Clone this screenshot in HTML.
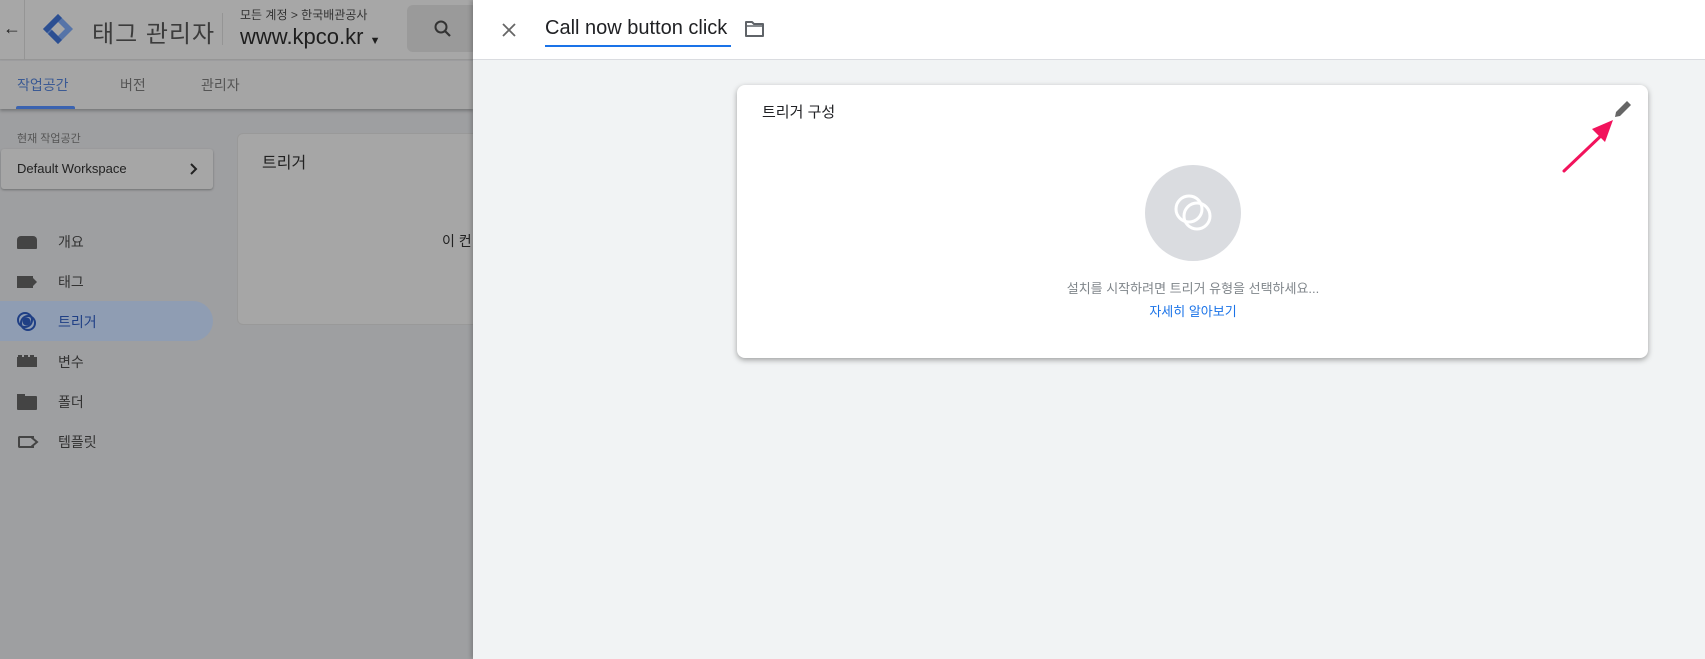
<!DOCTYPE html>
<html><head><meta charset="utf-8"><style>
*{margin:0;padding:0;box-sizing:border-box}
body{width:1705px;height:659px;overflow:hidden;position:relative;font-family:"Liberation Sans","Noto Sans CJK KR",sans-serif;background:#9e9fa1}
.a{position:absolute}
</style></head><body>
<div class="a" style="left:0;top:0;width:473px;height:60px;background:#a7a7a7;border-bottom:1px solid #979797"></div>
<div class="a" style="left:24px;top:0;width:1px;height:60px;background:#959595"></div>
<div class="a" style="left:3px;top:18px;font-size:18px;color:#222">←</div>
<svg class="a" style="left:42px;top:13px" width="32" height="32" viewBox="0 0 32 32"><path d="M16 1 L31 16 L16 31 L1 16 Z" fill="#5674a8"/><path d="M16 9 L23 16 L16 23 L9 16 Z" fill="#a7a7a7"/><path d="M1 16 L16 1 L20 5 L5 20Z" fill="#2c4f92"/><path d="M16 31 L6 21 L10 17 L20 27Z" fill="#2c4f92"/></svg>
<div class="a" style="left:92px;top:14px;font-size:24px;color:#3c3c3c;letter-spacing:1px">태그 관리자</div>
<div class="a" style="left:222px;top:13px;width:1px;height:32px;background:#959595"></div>
<div class="a" style="left:240px;top:6px;font-size:12px;color:#333">모든 계정 &gt; 한국배관공사</div>
<div class="a" style="left:240px;top:24px;font-size:22px;color:#1e1e1e">www.kpco.kr <span style="font-size:11px">▼</span></div>
<div class="a" style="left:407px;top:5px;width:70px;height:47px;background:#9a9a9a;border-radius:6px"></div>
<svg class="a" style="left:433px;top:19px" width="20" height="20" viewBox="0 0 20 20"><circle cx="8" cy="8" r="5.5" fill="none" stroke="#333" stroke-width="2"/><path d="M12 12l5 5" stroke="#333" stroke-width="2.2"/></svg>
<div class="a" style="left:0;top:61px;width:473px;height:48px;background:#a5a5a5;box-shadow:0 2px 3px rgba(0,0,0,.25)"></div>
<div class="a" style="left:17px;top:75px;font-size:14px;color:#3b5a94">작업공간</div>
<div class="a" style="left:16px;top:106px;width:59px;height:3px;background:#3b63b0;border-radius:2px 2px 0 0"></div>
<div class="a" style="left:120px;top:75px;font-size:14px;color:#555">버전</div>
<div class="a" style="left:201px;top:75px;font-size:14px;color:#555">관리자</div>
<div class="a" style="left:17px;top:130px;font-size:11px;color:#555">현재 작업공간</div>
<div class="a" style="left:1px;top:149px;width:212px;height:40px;background:#a6a6a6;border-radius:3px;box-shadow:0 1px 2px rgba(0,0,0,.3)"></div>
<div class="a" style="left:17px;top:161px;font-size:13px;color:#222">Default Workspace</div>
<svg class="a" style="left:189px;top:162px" width="10" height="14"><path d="M2 2L7 7L2 12" fill="none" stroke="#222" stroke-width="2"/></svg>
<div class="a" style="left:0;top:301px;width:213px;height:40px;background:#8f9db3;border-radius:0 20px 20px 0"></div>
<div class="a" style="left:17px;top:236px;width:20px;height:13px;background:#444;border-radius:4px 4px 1px 1px"></div>
<div class="a" style="left:17px;top:276px;width:16px;height:12px;background:#444"></div><div class="a" style="left:31px;top:276px;width:0;height:0;border-left:6px solid #444;border-top:6px solid transparent;border-bottom:6px solid transparent"></div>
<svg class="a" style="left:16px;top:311px" width="22" height="22"><circle cx="9" cy="9" r="7" fill="none" stroke="#1f3f85" stroke-width="2"/><circle cx="12" cy="12" r="7" fill="none" stroke="#1f3f85" stroke-width="2"/><circle cx="10.5" cy="10.5" r="4" fill="#1f3f85"/></svg>
<div class="a" style="left:17px;top:357px;width:20px;height:10px;background:#444"></div><div class="a" style="left:18px;top:355px;width:18px;height:3px;background:repeating-linear-gradient(90deg,#444 0 4px,transparent 4px 6px)"></div>
<div class="a" style="left:17px;top:396px;width:20px;height:14px;background:#444;border-radius:1px"></div><div class="a" style="left:17px;top:394px;width:8px;height:3px;background:#444"></div>
<div class="a" style="left:18px;top:436px;width:16px;height:12px;border:2px solid #444;border-right:none;border-radius:2px 0 0 2px"></div><svg class="a" style="left:31px;top:436px" width="8" height="12"><path d="M0 1L6 6L0 11" fill="none" stroke="#444" stroke-width="2"/></svg>
<div class="a" style="left:58px;top:232px;font-size:14px;color:#333">개요</div>
<div class="a" style="left:58px;top:272px;font-size:14px;color:#333">태그</div>
<div class="a" style="left:58px;top:312px;font-size:14px;color:#1f3f85">트리거</div>
<div class="a" style="left:58px;top:352px;font-size:14px;color:#333">변수</div>
<div class="a" style="left:58px;top:392px;font-size:14px;color:#333">폴더</div>
<div class="a" style="left:58px;top:432px;font-size:14px;color:#333">템플릿</div>
<div class="a" style="left:237px;top:133px;width:260px;height:192px;background:#a6a6a6;border:1px solid #999;border-radius:6px"></div>
<div class="a" style="left:262px;top:149px;font-size:16px;color:#222">트리거</div>
<div class="a" style="left:442px;top:231px;font-size:14px;color:#222">이 컨</div>
<div class="a" style="left:473px;top:0;width:1232px;height:659px;background:#f1f3f4;box-shadow:-2px 0 4px rgba(0,0,0,.2)"></div>
<div class="a" style="left:473px;top:0;width:1232px;height:60px;background:#fff;border-bottom:1px solid #dadce0"></div>
<svg class="a" style="left:500px;top:21px" width="18" height="18"><path d="M3 3L15 15M15 3L3 15" stroke="#666" stroke-width="1.8"/></svg>
<div class="a" style="left:545px;top:17px;font-size:20px;color:#202124">Call now button click</div>
<div class="a" style="left:545px;top:45px;width:186px;height:2px;background:#1a73e8"></div>
<svg class="a" style="left:744px;top:19px" width="22" height="20" viewBox="0 0 22 20"><path d="M2 3h6l2 2h9v12H2z" fill="none" stroke="#5f6368" stroke-width="2" stroke-linejoin="round"/><path d="M2 7h17" stroke="#5f6368" stroke-width="1.5"/></svg>
<div class="a" style="left:737px;top:85px;width:911px;height:273px;background:#fff;border-radius:8px;box-shadow:0 2px 6px rgba(0,0,0,.35)"></div>
<div class="a" style="left:762px;top:101px;font-size:15px;color:#202124">트리거 구성</div>
<svg class="a" style="left:1612px;top:98px" width="22" height="22" viewBox="0 0 22 22"><path d="M3 19l1-5L15 3l4 4L8 18z" fill="#666"/><path d="M16 2l4 4" stroke="#fff" stroke-width="1.3"/></svg>
<svg class="a" style="left:1555px;top:112px" width="70" height="70" viewBox="0 0 70 70"><path d="M9 59L50 20" stroke="#f2135c" stroke-width="3" stroke-linecap="round"/><path d="M58 8L37 17L50 30Z" fill="#f2135c"/></svg>
<div class="a" style="left:1145px;top:165px;width:96px;height:96px;border-radius:50%;background:#dadce0"></div>
<svg class="a" style="left:1165px;top:185px" width="56" height="56"><circle cx="24" cy="24" r="13" fill="none" stroke="#fff" stroke-width="3"/><circle cx="32" cy="31" r="13" fill="none" stroke="#fff" stroke-width="3"/></svg>
<div class="a" style="left:1040px;top:278px;width:306px;text-align:center;font-size:13px;color:#80868b">설치를 시작하려면 트리거 유형을 선택하세요...</div>
<div class="a" style="left:1040px;top:301px;width:306px;text-align:center;font-size:13px;color:#1a73e8">자세히 알아보기</div>
</body></html>
